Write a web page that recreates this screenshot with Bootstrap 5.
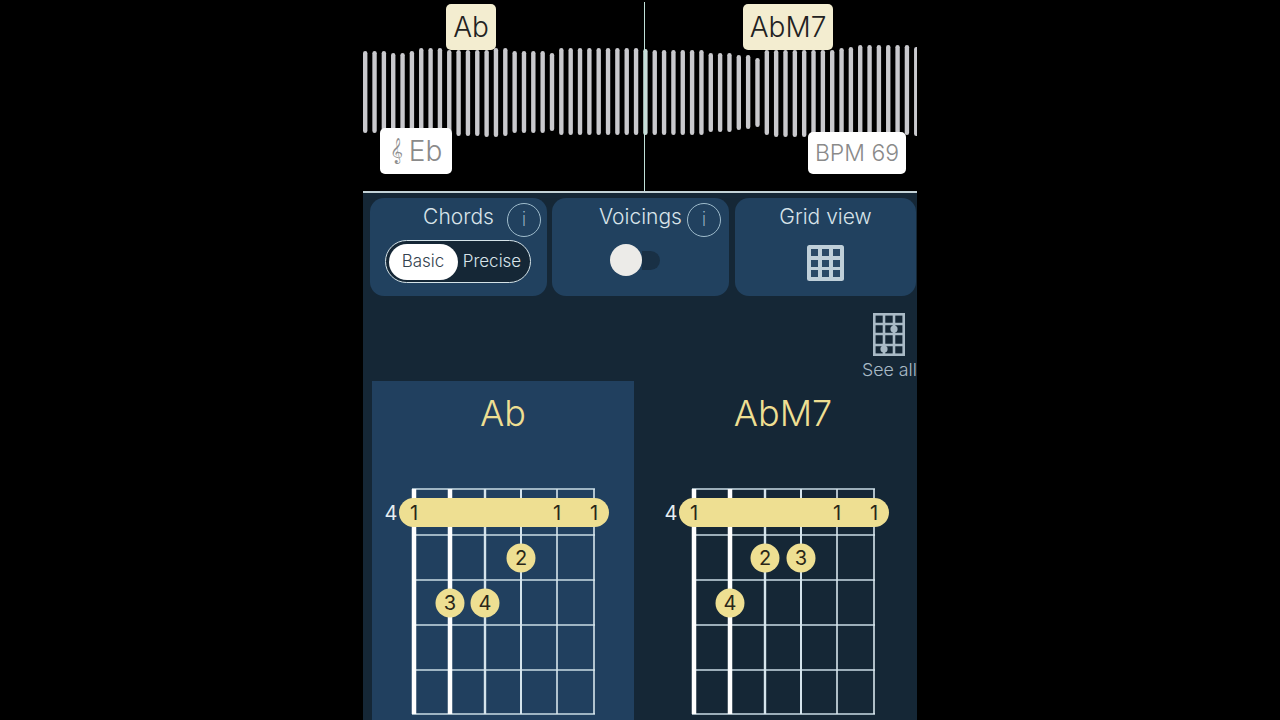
<!DOCTYPE html>
<html lang="en">
<head>
<meta charset="utf-8">
<title>Chords</title>
<link rel="stylesheet" href="https://cdn.jsdelivr.net/npm/bootstrap@5.3.0/dist/css/bootstrap.min.css">
<style>
html,body{height:720px;overflow:hidden;background:#000}
body{font-family:"Inter","Liberation Sans",sans-serif;font-weight:300}
.phone{width:554px;height:720px;margin:0 auto;overflow:hidden;position:relative;background:#152736}
.wave-zone{height:191px;background:#000;position:relative}
.wave-svg{display:block;width:554px;height:191px}
.chip{position:absolute;display:flex;align-items:center;justify-content:center;border-radius:5px;font-size:28px;line-height:1}
.chip-ab{left:83px;top:4px;width:50px;height:46px;background:#f3edd0;color:#222}
.chip-abm{left:380px;top:4px;width:90px;height:46px;background:#f3edd0;color:#222}
.chip-key{left:17px;top:128px;width:72px;height:46px;background:#fff;color:#8a8a8a}
.chip-bpm{left:445px;top:132px;width:98px;height:42px;background:#fff;color:#8a8a8a;font-size:23px}
.clef{font-family:"DejaVu Sans",sans-serif;font-size:22px;margin-right:6px;color:#8f8f8f}
.play-line{position:absolute;left:280.5px;top:2px;width:1px;height:189px;background:#bfe0d8}
.sep-line{height:2px;background:#c3d2d6}
.tool-row{padding:5px 1px 0 7px;gap:5px;height:103px}
.tool-pane{position:relative;height:98px;background:#21415f;border-radius:14px;color:#d8e4ea;font-size:21px;line-height:24px;padding-top:7px;text-align:center}
.pane-a{width:177px}.pane-b{width:177px}.pane-c{width:181px;margin-left:1px}
.info-dot{position:absolute;top:5px;width:34px;height:34px;border:1.5px solid #9fbccc;border-radius:50%;color:#a9c4d3;font-size:20px;line-height:31px;font-weight:200}
.pane-a .info-dot{left:137px}.pane-b .info-dot{left:135px}
.seg{width:146px;height:43px;margin:11px 0 0 15px;border:1.5px solid #d5e3e8;border-radius:22px;background:#152736;padding:2.5px;font-size:17px}
.seg-on{width:69px;background:#fff;color:#33424e;border-radius:18px;line-height:34px}
.seg-off{flex:1;color:#d8e4ea;line-height:34px;padding-right:1px;white-space:nowrap}
.tog-wrap{height:32px;margin-top:15px;padding-left:58px}
.tog-knob{width:32px;height:32px;border-radius:50%;background:#ecebe8}
.tog-track{width:18px;height:19px;background:#193045;border-radius:0 10px 10px 0}
.grid-ico{display:block;width:37px;height:36px;margin:16px auto 0}
.see-row{height:85px;padding-top:17px}
.see-box{width:54px;color:#a9bac6;font-size:17.8px;line-height:20px;white-space:nowrap;margin-right:1px}
.see-ico{display:block;width:32px;height:43px;margin:0 auto 4px}
.chord-row{padding-left:9px;gap:18px}
.chord-col{width:262px;height:339px}
.chord-on{background:#21405f}
.chord-name{height:89px;padding-top:10px;font-size:36px;line-height:44px;text-align:center;color:#eedf92}
.fret-svg{display:block;width:262px;height:250px}
.fret-svg text{font-family:"Inter","Liberation Sans",sans-serif;font-size:20px;font-weight:400;text-anchor:middle;fill:#2a2718}
.fret-svg text.fret-no{fill:#e6eef2}
</style>
</head>
<body>
<div class="phone">
  <div class="wave-zone">
    <svg class="wave-svg" id="wave" viewBox="0 0 554 191"></svg>
    <div class="play-line"></div>
    <div class="chip chip-ab">Ab</div>
    <div class="chip chip-abm">AbM7</div>
    <div class="chip chip-key"><span class="clef">&#x1D11E;</span>Eb</div>
    <div class="chip chip-bpm">BPM 69</div>
  </div>
  <div class="sep-line"></div>
  <div class="d-flex tool-row">
    <div class="tool-pane pane-a">
      <div>Chords</div>
      <div class="info-dot">i</div>
      <div class="d-flex seg"><div class="seg-on">Basic</div><div class="seg-off">Precise</div></div>
    </div>
    <div class="tool-pane pane-b">
      <div>Voicings</div>
      <div class="info-dot">i</div>
      <div class="d-flex align-items-center tog-wrap"><div class="tog-knob"></div><div class="tog-track"></div></div>
    </div>
    <div class="tool-pane pane-c">
      <div>Grid view</div>
      <svg class="grid-ico" viewBox="0 0 37 36"><rect width="37" height="36" rx="2.5" fill="#bfcfd9"/><g fill="#2a4966"><rect x="4" y="4" width="7" height="7"/><rect x="15" y="4" width="7" height="7"/><rect x="26" y="4" width="7" height="7"/><rect x="4" y="15" width="7" height="7"/><rect x="15" y="15" width="7" height="7"/><rect x="26" y="15" width="7" height="7"/><rect x="4" y="25" width="7" height="7"/><rect x="15" y="25" width="7" height="7"/><rect x="26" y="25" width="7" height="7"/></g></svg>
    </div>
  </div>
  <div class="d-flex justify-content-end see-row">
    <div class="see-box">
      <svg class="see-ico" viewBox="0 0 32 43"><g fill="none" stroke="#a9bac6" stroke-width="2.6"><rect x="1.3" y="1.3" width="29.4" height="40.4"/><path d="M11 1V42M21 1V42M1 11H31M1 21H31M1 32H31"/></g><circle cx="21" cy="16" r="3.6" fill="#a9bac6"/><circle cx="11" cy="36" r="3.6" fill="#a9bac6"/></svg>
      See all
    </div>
  </div>
  <div class="d-flex chord-row">
    <div class="chord-col chord-on">
      <div class="chord-name">Ab</div>
      <svg class="fret-svg" viewBox="0 0 262 250" data-dots="149,88,2;78,133,3;113,133,4"></svg>
    </div>
    <div class="chord-col">
      <div class="chord-name">AbM7</div>
      <svg class="fret-svg" viewBox="0 0 262 250" data-dots="113,88,2;149,88,3;78,133,4"></svg>
    </div>
  </div>
</div>
<script>
var tops=[51,51,51,53,53,51,48,48,48,50,50,50,50,50,48,48,51,51,51,51,53,48,48,48,48,48,48,48,48,48,49,50,50,50,50,50,50,53,53,53,55,55,58,50,50,50,50,50,50,50,50,48,47,45,45,45,45,45,45,47];
var bots=[133,133,131,131,131,133,133,133,133,133,136,136,136,137,137,136,133,133,133,133,131,135,135,135,135,135,135,135,135,135,135,135,135,135,135,135,135,132,132,132,130,129,127,135,137,137,137,137,137,135,135,135,135,135,135,135,135,135,135,136];
var w='';
tops.forEach(function(t,i){w+='<rect x="'+(0+9.34*i)+'" y="'+t+'" width="4.4" height="'+(bots[i]-t)+'" rx="2.2" fill="'+(i==30?'#c9dcd8':'#c9c9cd')+'"/>';});
document.getElementById('wave').innerHTML=w;
var xs=[42,78,113,149,185,222],wd=[4.5,4.5,2.4,2,1.6,1.6],fy=[19,65,110,155,200,244];
document.querySelectorAll('.fret-svg').forEach(function(s){
  var h='';
  fy.forEach(function(y,i){h+='<rect x="40" y="'+(y-.75)+'" width="183" height="1.5" fill="#c9dbe5"/>';});
  xs.forEach(function(x,i){h+='<rect x="'+(x-wd[i]/2)+'" y="19" width="'+wd[i]+'" height="225" fill="'+(i<2?'#fff':'#d5e4ec')+'"/>';});
  h+='<rect x="27" y="28" width="210" height="29" rx="14.5" fill="#eedf92"/>';
  h+='<text x="19" y="50" class="fret-no">4</text><text x="42" y="50">1</text><text x="185" y="50">1</text><text x="222" y="50">1</text>';
  s.dataset.dots.split(';').forEach(function(d){var p=d.split(',');h+='<circle cx="'+p[0]+'" cy="'+p[1]+'" r="14.5" fill="#eedf92"/><text x="'+p[0]+'" y="'+(+p[1]+7)+'">'+p[2]+'</text>';});
  s.innerHTML=h;
});
</script>
<script src="https://cdn.jsdelivr.net/npm/bootstrap@5.3.0/dist/js/bootstrap.bundle.min.js"></script>
</body>
</html>
